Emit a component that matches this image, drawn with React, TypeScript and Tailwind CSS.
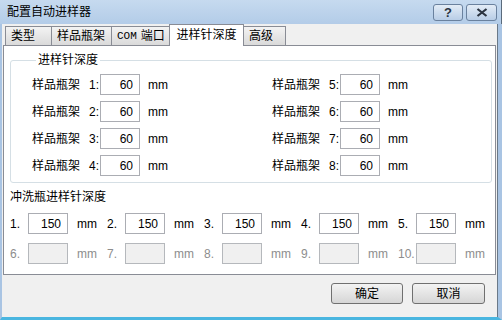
import React from 'react';

const font = "font-['Liberation_Sans','Noto_Sans_CJK_SC',sans-serif]";

const tabs = [
  { label: '类型', w: 'w-[47px]' },
  { label: '样品瓶架', w: 'w-[61px]' },
  { label: 'COM', extra: ' 端口', w: 'w-[59px]' },
  { label: '进样针深度', w: 'w-[75px]', active: true },
  { label: '高级', w: 'w-[43px]' },
];

const RackRow: React.FC<{ n: number }> = ({ n }) => (
  <div className="flex items-center h-[21px]">
    <span className="w-[57px] whitespace-nowrap">样品瓶架</span>
    <span className="w-[11px]">{n}:</span>
    <input
      readOnly
      value="60"
      className="w-[40px] h-[21px] border border-[#abadb3] bg-white text-right pr-[6px] outline-none text-[12px]"
    />
    <span className="ml-[8px]">mm</span>
  </div>
);

const WashItem: React.FC<{ n: number; disabled?: boolean }> = ({ n, disabled }) => (
  <div className={`flex items-center w-[98px] ${disabled ? 'text-[#8d8d8d]' : 'text-black'}`}>
    <span className="w-[18px]">{n}.</span>
    <input
      readOnly
      disabled={disabled}
      value={disabled ? '' : '150'}
      className={`w-[40px] h-[21px] border text-right pr-[6px] outline-none text-[12px] ${
        disabled ? 'bg-[#f0f0f0] border-[#b5b8bc]' : 'bg-white border-[#abadb3] text-black'
      }`}
    />
    <span className="ml-[9px]">mm</span>
  </div>
);

export default function App() {
  return (
    <div className={`w-[502px] h-[320px] flex flex-col text-[12px] text-black ${font}`}>
      {/* Title bar */}
      <div className="h-[24px] flex items-start bg-gradient-to-b from-[#c6daef] to-[#b3cce8] border-r border-[#5b6b7c]">
        <div className="pl-[7px] pt-[5px] text-[12px] leading-[14px] flex-1">配置自动进样器</div>
        <div className="flex gap-[3px] pr-[4px] pt-[4px]">
          <div className="w-[30px] h-[17px] rounded-[3px] border border-[#6a819e] bg-gradient-to-b from-[#e3ecf6] to-[#b8cde6] flex items-center justify-center text-[13px] font-bold text-[#2a3340] leading-none">
            ?
          </div>
          <div className="w-[31px] h-[17px] rounded-[3px] border border-[#6a819e] bg-gradient-to-b from-[#e3ecf6] to-[#b8cde6] flex items-center justify-center">
            <svg width="12" height="9" viewBox="0 0 12 9">
              <path d="M1.5 1 L10.5 8 M10.5 1 L1.5 8" stroke="#2a3340" strokeWidth="2.2" />
            </svg>
          </div>
        </div>
      </div>

      {/* Client area */}
      <div className="flex-1 flex flex-col bg-[#f0f0f0] border-l-2 border-l-[#a9c4e3] border-r-[4px] border-r-[#a9c4e3] border-b-[3px] border-b-[#4ab6e0]">
        <div className="flex-1 flex flex-col border-r border-[#6a7988] pl-[1px] pr-[1px]">
          {/* Tabs */}
          <div className="flex items-end h-[21px] pl-[2px]">
            {tabs.map((t) =>
              t.active ? (
                <div
                  key={t.label}
                  className={`${t.w} h-[22px] -mb-px relative z-10 bg-white border border-b-0 border-[#898c95] -ml-px flex items-center justify-center pb-[2px] whitespace-nowrap`}
                >
                  {t.label}
                </div>
              ) : (
                <div
                  key={t.label}
                  className={`${t.w} h-[19px] border border-b-0 border-[#898c95] -ml-px first:ml-0 bg-gradient-to-b from-[#f3f3f3] to-[#dadada] flex items-center pl-[5px] whitespace-nowrap overflow-hidden`}
                >
                  {t.extra ? (
                    <>
                      <span className="font-['Liberation_Mono',monospace] text-[11px]">{t.label}</span>
                      <span className="ml-[4px]">端口</span>
                    </>
                  ) : (
                    t.label
                  )}
                </div>
              )
            )}
          </div>

          {/* Tab panel */}
          <div className="h-[230px] border border-[#898c95] bg-white pl-[6px]">
            <fieldset className="mt-[7px] w-[482px] border border-[#d5dfe5] rounded-[3px] pl-[21px] pt-[7px] pb-[6px]">
              <legend className="ml-[4px] px-[2px] leading-[14px]">进样针深度</legend>
              <div className="grid grid-cols-[240px_200px] gap-y-[6px]">
                {[1, 5, 2, 6, 3, 7, 4, 8].map((n) => (
                  <RackRow key={n} n={n} />
                ))}
              </div>
            </fieldset>

            <div className="mt-[7px] leading-[14px]">冲洗瓶进样针深度</div>
            <div className="mt-[9px] flex flex-col gap-[9px]">
              <div className="flex">
                {[1, 2, 3, 4, 5].map((n) => (
                  <WashItem key={n} n={n} />
                ))}
              </div>
              <div className="flex">
                {[6, 7, 8, 9, 10].map((n) => (
                  <WashItem key={n} n={n} disabled />
                ))}
              </div>
            </div>
          </div>

          {/* Buttons */}
          <div className="flex justify-end gap-[9px] pr-[11px] mt-[8px]">
            <button className="w-[72px] h-[21px] rounded-[3px] border border-[#707070] bg-gradient-to-b from-[#f3f3f3] to-[#d6d6d6] text-[12px]">
              确定
            </button>
            <button className="w-[73px] h-[21px] rounded-[3px] border border-[#707070] bg-gradient-to-b from-[#f3f3f3] to-[#d6d6d6] text-[12px]">
              取消
            </button>
          </div>
        </div>
      </div>
    </div>
  );
}
